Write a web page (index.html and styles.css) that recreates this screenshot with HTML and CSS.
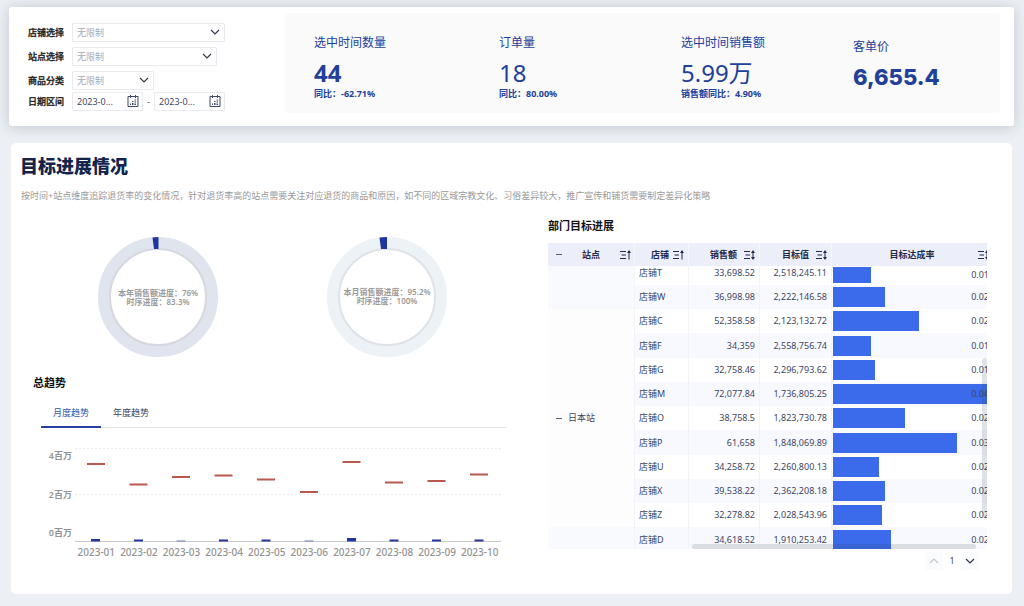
FILE: index.html
```html
<!DOCTYPE html>
<html lang="zh-CN">
<head>
<meta charset="utf-8">
<meta name="viewport" content="width=device-width, initial-scale=1">
<title>目标进展情况</title>
<link rel="stylesheet" href="styles.css">
</head>
<body>
<svg class="sprite" aria-hidden="true">
  <symbol id="chevron" viewBox="0 0 10 6"><path d="M1 1l4 4 4-4" fill="none" stroke="currentColor" stroke-width="1.2"/></symbol>
  <symbol id="calendar" viewBox="0 0 12 12"><path d="M1 1.500h10v10H1zM3.500 0v3M8.500 0v3" fill="none" stroke="currentColor" stroke-width="1"/><path d="M7.500 4.500h1.500v1H7.500zM5 6h1.500v1H5zM7.500 6.500h1.500v1H7.500zM3 8.500h1v1.500H3zM5 8h1.500v2H5zM7.500 8.500h1.500v1.500H7.500z" fill="currentColor"/></symbol>
  <symbol id="sort-up" viewBox="0 0 11 10"><path d="M0 1.500h6M1.500 5h4.500M0 8.500h6M9 9.500V1" fill="none" stroke="currentColor" stroke-width="1"/><path d="M7 3l2-3 2 3z" fill="currentColor"/></symbol>
  <symbol id="sort-both" viewBox="0 0 11 10"><path d="M0 1.500h6M1.500 5h4.500M0 8.500h6M9 8V2" fill="none" stroke="currentColor" stroke-width="1"/><path d="M7 3l2-3 2 3zM7 7l2 3 2-3z" fill="currentColor"/></symbol>
</svg>
<div class="page">
  <header class="overview">
    <form class="filters">
      <div class="filter"><label for="shop">店铺选择</label><span class="field field-wide"><select id="shop"><option>无限制</option></select><svg class="chevron"><use href="#chevron"/></svg></span></div>
      <div class="filter"><label for="site">站点选择</label><span class="field field-medium"><select id="site"><option>无限制</option></select><svg class="chevron"><use href="#chevron"/></svg></span></div>
      <div class="filter"><label for="category">商品分类</label><span class="field field-small"><select id="category"><option>无限制</option></select><svg class="chevron"><use href="#chevron"/></svg></span></div>
      <div class="filter filter-date"><label for="from">日期区间</label><span class="field field-date"><input id="from" type="text" value="2023-0..."><svg class="calendar"><use href="#calendar"/></svg></span><span class="dash">-</span><span class="field field-date"><input type="text" aria-label="结束日期" value="2023-0..."><svg class="calendar"><use href="#calendar"/></svg></span></div>
    </form>
    <section class="kpis">
      <div class="kpi"><h3>选中时间数量</h3><p class="value strong">44</p><p class="note">同比：-62.71%</p></div>
      <div class="kpi"><h3>订单量</h3><p class="value">18</p><p class="note">同比：80.00%</p></div>
      <div class="kpi"><h3>选中时间销售额</h3><p class="value">5.99万</p><p class="note">销售额同比：4.90%</p></div>
      <div class="kpi kpi-short"><h3>客单价</h3><p class="value geometric">6,655.4</p></div>
    </section>
  </header>

  <main class="progress">
    <h1>目标进展情况</h1>
    <p class="summary">按时间+站点维度追踪退货率的变化情况，针对退货率高的站点需要关注对应退货的商品和原因，如不同的区域宗教文化、习俗差异较大，推广宣传和铺货需要制定差异化策略</p>
    <div class="columns">
      <section class="charts">
        <div class="donuts">
          <div class="donut">
            <svg viewBox="0 0 120 120"><circle cx="60" cy="60" r="54" fill="none" stroke="#dfe4ee" stroke-width="12"/><circle cx="60" cy="60" r="48" fill="none" stroke="#d6d7df" stroke-width="2"/><path d="M54.500 .500L60.500 0V12H56z" fill="#1e349f"/></svg>
            <p>本年销售额进度：76%<br>时序进度：83.3%</p>
          </div>
          <div class="donut">
            <svg viewBox="0 0 120 120"><circle cx="60" cy="60" r="54" fill="none" stroke="#edf2f7" stroke-width="12"/><circle cx="60" cy="60" r="48" fill="none" stroke="#dfe2e8" stroke-width="2"/><path d="M52.500 .500L60 0V12H54z" fill="#1e349f"/></svg>
            <p class="alt">本月销售额进度：95.2%<br>时序进度：100%</p>
          </div>
        </div>
        <h2 class="trend-title">总趋势</h2>
        <div class="tabs" role="tablist"><button type="button" role="tab" aria-selected="true" class="tab active">月度趋势</button><button type="button" role="tab" aria-selected="false" class="tab">年度趋势</button></div>
        <div class="chart">
          <div class="y-axis"><span>4百万</span><span>2百万</span><span>0百万</span></div>
          <svg class="plot" viewBox="0 0 426 94" preserveAspectRatio="none">
            <path d="M0 .5h426M0 46.500h426" stroke="#ececec" stroke-dasharray="2 2"/>
            <path d="M0 93.500h426" stroke="#c8cacf"/>
            <path d="M12 16h18M54.500 36.500h18M97 29h18M139.500 27.500h18M182 31.500h18M225 44h18M267.500 14h18M310 34.500h18M352.500 33h18M395 26.500h18" stroke="#b9584d" stroke-width="2"/>
            <path d="M16 91h9v2.500h-9zM59 91.500h9v2h-9zM144 91.500h9v2h-9zM186.500 91.500h9v2h-9zM272 90h9v3.500h-9zM314.500 91.500h9v2h-9zM357 91.500h9v2h-9zM399.500 91.500h9v2h-9z" fill="#22369b"/>
            <path d="M101.500 92.500h9v1h-9zM229.500 92.500h9v1h-9z" fill="#6d7fa8"/>
          </svg>
          <div class="x-axis"><span>2023-01</span><span>2023-02</span><span>2023-03</span><span>2023-04</span><span>2023-05</span><span>2023-06</span><span>2023-07</span><span>2023-08</span><span>2023-09</span><span>2023-10</span></div>
        </div>
      </section>

      <section class="department">
        <h2>部门目标进展</h2>
        <div class="table-view">
          <table>
            <colgroup><col class="c-site"><col class="c-shop"><col class="c-sales"><col class="c-goal"><col></colgroup>
            <thead><tr>
              <th><div class="head"><button type="button" class="fold" aria-label="全部收起"></button><span>站点</span><svg class="sort"><use href="#sort-up"/></svg></div></th>
              <th><div class="head"><span>店铺</span><svg class="sort"><use href="#sort-up"/></svg></div></th>
              <th><div class="head"><span>销售额</span><svg class="sort"><use href="#sort-both"/></svg></div></th>
              <th><div class="head"><span>目标值</span><svg class="sort"><use href="#sort-both"/></svg></div></th>
              <th><div class="head"><span>目标达成率</span><svg class="sort"><use href="#sort-both"/></svg></div></th>
            </tr></thead>
            <tbody>
              <tr><td rowspan="2" class="group tint"></td><td>店铺T</td><td class="num">33,698.52</td><td class="num">2,518,245.11</td><td class="rate"><div class="meter"><i style="width:24%"></i><span>0.01</span></div></td></tr>
              <tr><td>店铺W</td><td class="num">36,998.98</td><td class="num">2,222,146.58</td><td class="rate"><div class="meter"><i style="width:32.500%"></i><span>0.02</span></div></td></tr>
              <tr><td rowspan="9" class="group"><div class="site"><button type="button" class="fold" aria-label="收起日本站"></button>日本站</div></td><td>店铺C</td><td class="num">52,358.58</td><td class="num">2,123,132.72</td><td class="rate"><div class="meter"><i style="width:54%"></i><span>0.02</span></div></td></tr>
              <tr><td>店铺F</td><td class="num">34,359</td><td class="num">2,558,756.74</td><td class="rate"><div class="meter"><i style="width:24%"></i><span>0.01</span></div></td></tr>
              <tr><td>店铺G</td><td class="num">32,758.46</td><td class="num">2,296,793.62</td><td class="rate"><div class="meter"><i style="width:26%"></i><span>0.01</span></div></td></tr>
              <tr><td>店铺M</td><td class="num">72,077.84</td><td class="num">1,736,805.25</td><td class="rate"><div class="meter"><i style="width:100%"></i><span>0.04</span></div></td></tr>
              <tr><td>店铺O</td><td class="num">38,758.5</td><td class="num">1,823,730.78</td><td class="rate"><div class="meter"><i style="width:45%"></i><span>0.02</span></div></td></tr>
              <tr><td>店铺P</td><td class="num">61,658</td><td class="num">1,848,069.89</td><td class="rate"><div class="meter"><i style="width:77.500%"></i><span>0.03</span></div></td></tr>
              <tr><td>店铺U</td><td class="num">34,258.72</td><td class="num">2,260,800.13</td><td class="rate"><div class="meter"><i style="width:28.500%"></i><span>0.02</span></div></td></tr>
              <tr><td>店铺X</td><td class="num">39,538.22</td><td class="num">2,362,208.18</td><td class="rate"><div class="meter"><i style="width:32.500%"></i><span>0.02</span></div></td></tr>
              <tr><td>店铺Z</td><td class="num">32,278.82</td><td class="num">2,028,543.96</td><td class="rate"><div class="meter"><i style="width:30.500%"></i><span>0.02</span></div></td></tr>
              <tr><td class="group tint"></td><td>店铺D</td><td class="num">34,618.52</td><td class="num">1,910,253.42</td><td class="rate"><div class="meter"><i style="width:36.500%"></i><span>0.02</span></div></td></tr>
            </tbody>
          </table>
          <span class="thumb thumb-y"></span><span class="thumb thumb-x"></span>
        </div>
        <nav class="pager" aria-label="分页"><button type="button" disabled aria-label="上一页"><svg class="chevron-up"><use href="#chevron"/></svg></button><span>1</span><button type="button" aria-label="下一页"><svg><use href="#chevron"/></svg></button></nav>
      </section>
    </div>
  </main>
</div>
</body>
</html>
```
FILE: styles.css
```css
* { box-sizing: border-box; }
body {
  margin: 0;
  background: #ecf0f5;
  color: #3c4663;
  font: 9px/14px "Noto Sans", "Noto Sans CJK SC", sans-serif;
}
h1, h2, h3, p { margin: 0; }
button, input, select { font: inherit; color: inherit; margin: 0; padding: 0; border: 0; background: none; }
.sprite { display: none; }
.page { padding: 7px 10px 12px 9px; }

/* Overview */
.overview {
  display: flex;
  padding: 6px 14px 13px 19px;
  background: #fff;
  border-radius: 3px;
  box-shadow: 0 1px 14px rgba(40, 50, 70, .22);
}
.filters { flex: 0 0 257px; display: flex; flex-direction: column; gap: 5px; padding-top: 10px; }
.filter { display: flex; align-items: center; }
.filter-date { margin-top: -3px; }
.filter label { width: 44px; color: #222; font-weight: 500; -webkit-text-stroke: 0.3px #222; }
.field { position: relative; display: flex; height: 19px; border: 1px solid #e8eaf0; border-radius: 1px; }
.field-wide { width: 153px; }
.field-medium { width: 145px; }
.field-small { width: 82px; }
.field-date { width: 71px; }
.field select { appearance: none; width: 100%; padding: 0 4px; color: #a3a9ba; }
.field input { width: 100%; padding: 0 20px 0 4px; color: #3f4866; }
.chevron { position: absolute; right: 4px; top: 5px; width: 10px; height: 6px; color: #333a4d; pointer-events: none; }
.calendar { position: absolute; right: 3px; top: 2px; width: 12px; height: 12px; color: #3f4866; }
.dash { width: 11px; text-align: center; }
.kpis {
  flex: 1;
  display: grid;
  grid-template-columns: 185fr 182fr 172fr 147fr;
  height: 100px;
  padding: 21px 0 0 29px;
  background: #fafafb;
  border-radius: 4px;
  color: #21409a;
}
.kpi h3 { font-size: 12px; line-height: 18px; font-weight: 400; }
.kpi .value { margin-top: 6px; font-size: 24px; line-height: 30px; }
.kpi .value.strong { font-weight: 700; }
.kpi .value.geometric { font-family: Inter, sans-serif; font-size: 22px; font-weight: 800; }
.kpi .note { font-weight: 700; line-height: 12px; }
.kpi-short { padding-top: 4px; }

/* Progress card */
.progress { margin: 17px 2px 0; padding: 11px 25px 24px 9px; background: #fff; border-radius: 5px; }
h1 { color: #14234a; font-size: 18px; line-height: 24px; font-weight: 900; }
.summary { margin: 11px 0 15px 1px; color: #999; }
.columns { display: grid; grid-template-columns: minmax(0, 486fr) minmax(0, 439fr); gap: 42px; }
h2 { color: #111; font-size: 11px; line-height: 16px; font-weight: 700; }
.donuts { display: flex; gap: 109px; padding: 19px 0 18px 78px; }
.donut { display: grid; width: 120px; height: 120px; place-items: center; }
.donut > * { grid-area: 1 / 1; }
.donut svg { width: 120px; height: 120px; }
.donut p { color: #999; font-size: 8px; line-height: 9px; font-weight: 600; text-align: center; white-space: nowrap; }
.donut .alt { padding-bottom: 2px; }
.trend-title { padding-left: 13px; }
.tabs { display: flex; margin: 8px 0 20px 21px; box-shadow: inset 0 -1px #e3e5ea; }
.tab { padding: 7px 12px 6px; border-bottom: 2px solid transparent; cursor: pointer; }
.tab.active { color: #3454ab; border-color: #2a3f9f; }
.chart { display: grid; grid-template-columns: 31px minmax(0, 1fr); column-gap: 3px; row-gap: 4px; padding: 0 5px 0 21px; color: #939393; font-weight: 600; line-height: 12px; }
.y-axis { display: flex; flex-direction: column; justify-content: space-between; padding: 2px 0 3px; text-align: right; }
.plot { width: 100%; height: 94px; }
.x-axis { grid-column: 2; display: grid; grid-template-columns: repeat(10, 1fr); font-size: 10px; font-weight: 500; text-align: center; white-space: nowrap; }

/* Department table */
.table-view { position: relative; height: 306px; margin-top: 9px; overflow: hidden; }
table { width: 100%; min-width: 445px; table-layout: fixed; border-collapse: separate; border-spacing: 0; }
.c-site { width: 87px; }
.c-shop { width: 54px; }
.c-sales { width: 71px; }
.c-goal { width: 72px; }
th { height: 23px; padding: 0; background: #eceefa; border-right: 1px solid #f5f6fc; color: #1e294b; font-weight: 700; }
.head { position: relative; display: flex; justify-content: center; align-items: center; gap: 4px; padding: 0 4px; }
.sort { width: 11px; height: 10px; flex: none; }
th:first-child .sort, th:last-child .sort { position: absolute; right: 3px; }
th:nth-child(2) .head { justify-content: flex-end; }
th:nth-child(3) .head, th:nth-child(4) .head { justify-content: flex-end; gap: 7px; }
th:first-child .fold { position: absolute; left: 6px; }
.fold { width: 10px; height: 10px; padding: 0 2px; cursor: pointer; }
.fold::before { content: ""; display: block; height: 1px; background: #59617a; }
td { height: 24px; padding: 0 4px; border-right: 1px solid #f2f3f8; line-height: 14px; }
tr:nth-child(4n) td:not(.group) { height: 25px; }
tbody tr:nth-child(even) { background: #f8f9fe; }
tbody tr:first-child td { height: 19px; padding-bottom: 5px; }
.group { background: #fdfdfe; }
tbody .group.tint { background: #f9fafe; }
.site { display: flex; align-items: center; gap: 4px; padding-left: 2px; }
.num { text-align: right; }
td.rate { padding: 0 0 0 1px; border: 0; }
.meter { display: grid; height: 20px; align-items: center; }
.meter > * { grid-area: 1 / 1; }
.meter i { height: 100%; background: #3b6aea; }
.meter span { z-index: 1; padding-right: 4px; text-align: right; }
tbody tr:first-child td.rate { padding-bottom: 2px; }
tbody tr:first-child .meter { height: 16px; }
.thumb { position: absolute; z-index: 2; background: rgba(50, 65, 80, .15); border-radius: 3px; }
.thumb-y { right: 0; top: 115px; width: 5px; height: 158px; }
.thumb-x { left: 144px; right: 11px; bottom: 0; height: 5px; }
.pager { display: flex; justify-content: flex-end; align-items: center; padding: 3px 8px 0 0; }
.pager button { display: grid; place-items: center; width: 18px; height: 18px; background: #fafbfd; color: #2c3550; }
.pager button:disabled { color: #c4c7cf; }
.pager svg { width: 10px; height: 6px; }
.pager .chevron-up { transform: rotate(180deg); }
.pager span { width: 18px; text-align: center; }
```
